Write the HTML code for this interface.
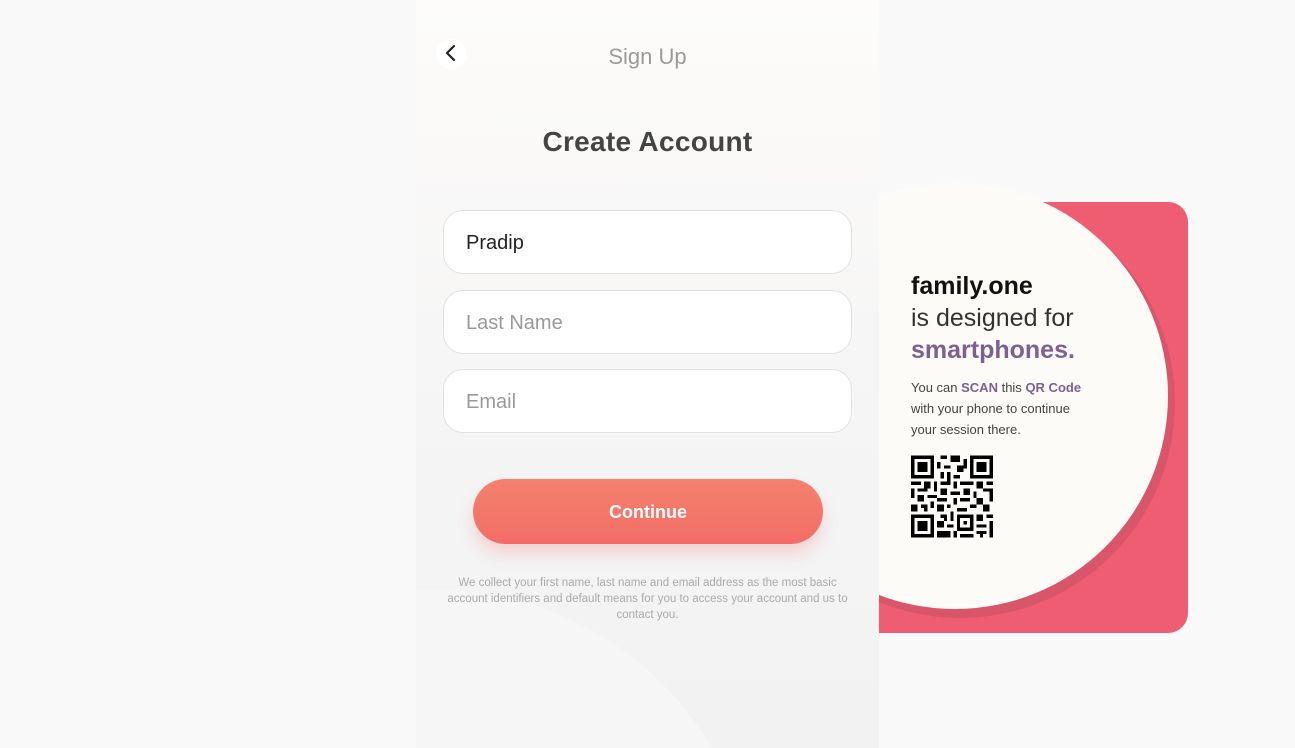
<!DOCTYPE html>
<html><head><meta charset="utf-8"><style>
*{margin:0;padding:0;box-sizing:border-box}
html,body{overflow:hidden}
body{width:1295px;height:748px;background:#f9f9f9;font-family:"Liberation Sans",sans-serif;position:relative}
.panel{position:absolute;left:416px;top:0;width:463px;height:748px;background:linear-gradient(180deg,#fdfcfa 0%,#faf9f8 20%,#f5f5f5 55%,#f2f2f2 100%);overflow:hidden;z-index:2}
.blob{position:absolute;left:-300px;top:590px;width:640px;height:640px;border-radius:50%;background:#f6f6f6}
.back{position:absolute;left:20px;top:39px;width:30px;height:30px;border-radius:50%;background:#fff}
.title{position:absolute;left:0;width:463px;top:44px;text-align:center;font-size:22px;color:#9a9a9a}
.h1{position:absolute;left:0;width:463px;top:126px;text-align:center;font-size:28px;font-weight:bold;color:#444;letter-spacing:.3px}
.inp{position:absolute;left:27px;width:409px;height:64px;border:1px solid #e2e2e2;border-radius:20px;background:#fff;font-size:20px;padding-left:22px;line-height:64px;color:#999}
.btn{position:absolute;left:57px;top:479px;width:350px;height:65px;border-radius:33px;background:linear-gradient(180deg,#f4806d,#f37268 80%,#f46a6a);color:#fff;font-weight:bold;font-size:18px;text-align:center;line-height:66px;box-shadow:0 10px 16px rgba(244,110,110,.25)}
.note{position:absolute;left:26px;width:411px;top:575px;text-align:center;font-size:11.5px;line-height:16px;color:#aaa}
.card{position:absolute;left:879px;top:202px;width:309px;height:431px;background:#ef5d73;border-radius:0 20px 20px 0}
.sh{position:absolute;left:745px;top:188px;width:430px;height:430px;border-radius:50%;background:#d9566a;clip-path:inset(14px 0 0 0)}
.c{position:absolute;left:742px;top:183px;width:426px;height:426px;border-radius:50%;background:#fdfbf8}
.txt{position:absolute;left:911px;top:270px;color:#222}
</style></head><body>
<div class="panel">
<div class="blob"></div>
<div class="back"><svg width="30" height="30" viewBox="0 0 30 30"><path d="M18 7 L11 14 L18 21" fill="none" stroke="#222" stroke-width="2.2" stroke-linecap="round" stroke-linejoin="round"/></svg></div>
<div class="title">Sign Up</div>
<div class="h1">Create Account</div>
<div class="inp" style="top:210px;color:#222">Pradip</div>
<div class="inp" style="top:290px">Last Name</div>
<div class="inp" style="top:369px">Email</div>
<div class="btn">Continue</div>
<div class="note">We collect your first name, last name and email address as the most basic account identifiers and default means for you to access your account and us to contact you.</div>
</div>
<div class="card"></div><div class="sh"></div><div class="c"></div>
<div class="txt">
<div style="font-size:25px;font-weight:bold;color:#111;line-height:32px">family.one</div>
<div style="font-size:25px;color:#333;line-height:32px">is designed for</div>
<div style="font-size:25px;font-weight:bold;color:#7d5f94;line-height:32px">smartphones.</div>
<div style="font-size:13px;line-height:21px;color:#444;margin-top:11px">You can <b style="color:#7d5f94">SCAN</b> this <b style="color:#7d5f94">QR Code</b><br>with your phone to continue<br>your session there.</div>
</div>
<svg style="position:absolute;left:911px;top:455px" width="82" height="83" viewBox="0 0 25 25" shape-rendering="crispEdges">
<g fill="#000">
<path d="M0 0h7v7h-7zM1 1v5h5v-5zM2 2h3v3h-3z" fill-rule="evenodd"/>
<path d="M18 0h7v7h-7zM19 1v5h5v-5zM20 2h3v3h-3z" fill-rule="evenodd"/>
<path d="M0 18h7v7h-7zM1 19v5h5v-5zM2 20h3v3h-3z" fill-rule="evenodd"/>
<path d="M9 0h2v1h-2zM12 0h3v2h-3zM8 2h1v2h-1zM10 3h2v1h-2zM14 3h2v2h-2zM9 5h1v2h-1zM11 5h1v3h-1zM13 6h2v1h-2zM16 1h1v3h-1z"/>
<path d="M0 8h3v1h-3zM4 8h2v2h-2zM7 8h1v3h-1zM9 8h3v1h-3zM13 8h1v2h-1zM15 8h4v1h-4zM20 8h2v2h-2zM23 8h2v1h-2z"/>
<path d="M0 10h1v3h-1zM2 10h3v1h-3zM9 10h2v2h-2zM12 11h3v1h-3zM16 10h2v2h-2zM19 11h1v2h-1zM22 10h3v1h-3zM24 11h1v3h-1z"/>
<path d="M2 12h2v2h-2zM5 12h3v1h-3zM8 13h3v1h-3zM13 13h1v2h-1zM15 13h3v1h-3zM20 13h2v2h-2zM6 14h1v2h-1z"/>
<path d="M0 15h2v2h-2zM3 15h2v1h-2zM8 15h2v2h-2zM11 15h1v1h-1zM14 16h3v1h-3zM18 15h2v1h-2zM22 15h2v2h-2zM4 16h1v1h-1z"/>
<path d="M9 18h2v1h-2zM12 17h1v3h-1zM14 18h5v5h-5zM15 19v3h3v-3zM16 20h1v1h-1zM20 18h2v2h-2zM23 18h2v1h-2z" fill-rule="evenodd"/>
<path d="M8 20h2v2h-2zM11 21h2v1h-2zM20 21h3v1h-3zM24 20h1v5h-1zM8 23h4v2h-4zM13 23h1v2h-1zM15 24h4v1h-4zM20 23h3v1h-3zM21 24h1v1h-1zM10 19h1v1h-1z"/>
</g></svg>
</body></html>
